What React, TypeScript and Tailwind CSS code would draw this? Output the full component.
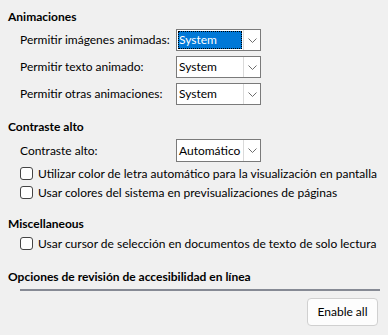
// Panel de accesibilidad: opciones de animación, contraste y revisión
import type { ReactNode } from 'react'

const FONT = "font-['Lato',sans-serif]"

function Heading({ children }: { children: ReactNode }) {
  return <div className="h-4 pl-2 text-[12px] leading-4 font-bold text-black whitespace-nowrap">{children}</div>
}

function Chevron() {
  return (
    <svg width="9" height="5" viewBox="0 0 9 5" className="text-[#6d6d6d]">
      <path d="M0.5 0.5 L4.5 4.5 L8.5 0.5" fill="none" stroke="currentColor" strokeWidth="1" />
    </svg>
  )
}

function Select({ value, focused = false, tall = false }: { value: string; focused?: boolean; tall?: boolean }) {
  return (
    <div className={`flex shrink-0 w-[85px] ${tall ? 'h-[23px]' : 'h-[22px]'} border border-[#7a7a7a] bg-white`}>
      <div className="flex-1 p-px">
        <div
          className={`h-full flex items-center pl-px text-[12px] whitespace-nowrap ${
            focused ? 'bg-[#0078d7] text-white outline-1 outline-dotted outline-black -outline-offset-1' : 'text-black'
          }`}
        >
          {value}
        </div>
      </div>
      <div className="w-[17px] flex items-center justify-center border-l border-[#dadada]">
        <Chevron />
      </div>
    </div>
  )
}

function SelectRow({ label, value, focused, tall }: { label: string; value: string; focused?: boolean; tall?: boolean }) {
  return (
    <div className="flex items-center pl-5">
      <span className="w-[156px] shrink-0 text-[12px] text-black whitespace-nowrap">{label}</span>
      <Select value={value} focused={focused} tall={tall} />
    </div>
  )
}

function Check({ label }: { label: string }) {
  return (
    <div className="flex items-center h-[19px] pl-5 gap-[5px]">
      <span className="shrink-0 w-[13px] h-[13px] rounded-[3px] border border-[#444] bg-white" />
      <span className="text-[12px] text-black whitespace-nowrap">{label}</span>
    </div>
  )
}

export default function App() {
  return (
    <div className={`w-[388px] h-[335px] bg-[#f0f0f0] overflow-hidden ${FONT}`}>
      <div className="pt-[9px]">
        <Heading>Animaciones</Heading>
        {/* Animaciones */}
        <div className="mt-[4px] flex flex-col gap-[5px]">
          <SelectRow label="Permitir imágenes animadas:" value="System" focused />
          <SelectRow label="Permitir texto animado:" value="System" />
          <SelectRow label="Permitir otras animaciones:" value="System" />
        </div>

        <div className="mt-[14px]">
          <Heading>Contraste alto</Heading>
        </div>
        <div className="mt-[4px]">
          <SelectRow label="Contraste alto:" value="Automático" tall />
        </div>
        <div className="mt-[2px]">
          <Check label="Utilizar color de letra automático para la visualización en pantalla" />
          <Check label="Usar colores del sistema en previsualizaciones de páginas" />
        </div>

        <div className="mt-[14px]">
          <Heading>Miscellaneous</Heading>
        </div>
        <div className="mt-[2px]">
          <Check label="Usar cursor de selección en documentos de texto de solo lectura" />
        </div>

        <div className="mt-[16px]">
          <Heading>Opciones de revisión de accesibilidad en línea</Heading>
        </div>
        <div className="ml-5 mr-2 mt-[4px] h-[2px] bg-[#868a94]" />
        <div className="flex justify-end pr-[10px] pt-[7px]">
          <button className="w-[71px] h-[28px] rounded-[4px] border border-[#d0d0d0] bg-[#fdfdfd] text-[12px] text-black">
            Enable all
          </button>
        </div>
      </div>
    </div>
  )
}
